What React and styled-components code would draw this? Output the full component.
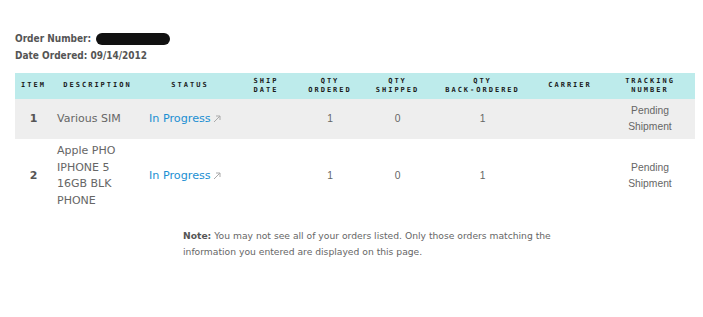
import React from "react";
import styled, { createGlobalStyle } from "styled-components";

const Global = createGlobalStyle`
  html, body { margin: 0; padding: 0; background: #fff; }
  body { font-family: "DejaVu Sans", Verdana, sans-serif; }
`;

const Page = styled.div`
  padding: 30px 8px 0 15px;
  width: 680px;
`;

const InfoLine = styled.div`
  font-family: "DejaVu Sans Condensed", "DejaVu Sans", Verdana, sans-serif;
  font-stretch: condensed;
  font-weight: bold;
  font-size: 10px;
  color: #555;
  height: 17px;
  line-height: 17px;
  display: flex;
  align-items: center;
`;

const Redacted = styled.span`
  display: inline-block;
  width: 74px;
  height: 12px;
  border-radius: 6px;
  background: #111;
  margin-left: 5px;
`;

const Table = styled.table`
  margin-top: 9px;
  width: 680px;
  border-collapse: collapse;
  table-layout: fixed;
`;

const Th = styled.th`
  background: #bdebeb;
  height: 26px;
  padding: 0;
  font-family: "DejaVu Sans Mono", monospace;
  font-weight: bold;
  font-size: 7px;
  letter-spacing: 2px;
  line-height: 9.5px;
  color: #1a1a1a;
  text-align: center;
  vertical-align: middle;
`;

const Tr = styled.tr`
  background: ${(p) => (p.$shaded ? "#eeeeee" : "#ffffff")};
`;

const Td = styled.td`
  padding: 4px ${(p) => p.$pr || 0}px 4px ${(p) => p.$pl || 0}px;
  vertical-align: middle;
  text-align: ${(p) => p.$align || "center"};
  font-family: ${(p) =>
    p.$arial ? `"Liberation Sans", Arial, sans-serif` : `"DejaVu Sans", Verdana, sans-serif`};
  font-size: ${(p) => (p.$arial ? "10.3px" : "11px")};
  font-weight: ${(p) => (p.$bold ? "bold" : "normal")};
  line-height: ${(p) => (p.$arial ? "16px" : "16.6px")};
  color: ${(p) => (p.$bold ? "#555" : "#666")};
`;

const Link = styled.a`
  color: #1b8fd2;
  text-decoration: none;
  font-family: "DejaVu Sans", Verdana, sans-serif;
  font-size: 11.2px;
  display: inline-flex;
  align-items: center;
  gap: 2px;
`;

const Note = styled.div`
  margin: 15px 0 0 168px;
  font-family: "DejaVu Sans", Verdana, sans-serif;
  font-size: 9.2px;
  line-height: 16px;
  color: #666;
  b { color: #555; }
`;

const NoteLine = styled.div`
  white-space: nowrap;
`;

const Ext = () => (
  <svg width="8" height="8" viewBox="0 0 8 8">
    <path d="M1 7 L7 1 M3 1 H7 V5" stroke="#aaa" strokeWidth="1" fill="none" />
  </svg>
);

const rows = [
  { n: "1", desc: "Various SIM", ord: "1", shp: "0", back: "1", shaded: true },
  { n: "2", desc: "Apple PHO IPHONE 5 16GB BLK PHONE", ord: "1", shp: "0", back: "1" },
];

const noteLine1 = " You may not see all of your orders listed. Only those orders matching the";
const noteLine2 = "information you entered are displayed on this page.";

export default function App() {
  return (
    <>
      <Global />
      <Page>
        <InfoLine>
          Order Number:<Redacted />
        </InfoLine>
        <InfoLine>Date Ordered: 09/14/2012</InfoLine>
        <Table>
          <colgroup>
            <col style={{ width: 37 }} />
            <col style={{ width: 91 }} />
            <col style={{ width: 94 }} />
            <col style={{ width: 58 }} />
            <col style={{ width: 70 }} />
            <col style={{ width: 65 }} />
            <col style={{ width: 105 }} />
            <col style={{ width: 70 }} />
            <col style={{ width: 90 }} />
          </colgroup>
          <thead>
            <tr>
              <Th>ITEM</Th>
              <Th>DESCRIPTION</Th>
              <Th>STATUS</Th>
              <Th>SHIP<br />DATE</Th>
              <Th>QTY<br />ORDERED</Th>
              <Th>QTY<br />SHIPPED</Th>
              <Th>QTY<br />BACK-ORDERED</Th>
              <Th>CARRIER</Th>
              <Th>TRACKING<br />NUMBER</Th>
            </tr>
          </thead>
          <tbody>
            {rows.map((r) => (
              <Tr key={r.n} $shaded={r.shaded}>
                <Td $bold>{r.n}</Td>
                <Td $align="left" $pl={5} $pr={12}>{r.desc}</Td>
                <Td $align="left" $pl={6}>
                  <Link href="#">In Progress<Ext /></Link>
                </Td>
                <Td></Td>
                <Td $arial>{r.ord}</Td>
                <Td $arial>{r.shp}</Td>
                <Td $arial>{r.back}</Td>
                <Td></Td>
                <Td $arial>Pending<br />Shipment</Td>
              </Tr>
            ))}
          </tbody>
        </Table>
        <Note>
          <NoteLine>
            <b>Note:</b>{noteLine1}
          </NoteLine>
          <NoteLine>{noteLine2}</NoteLine>
        </Note>
      </Page>
    </>
  );
}
